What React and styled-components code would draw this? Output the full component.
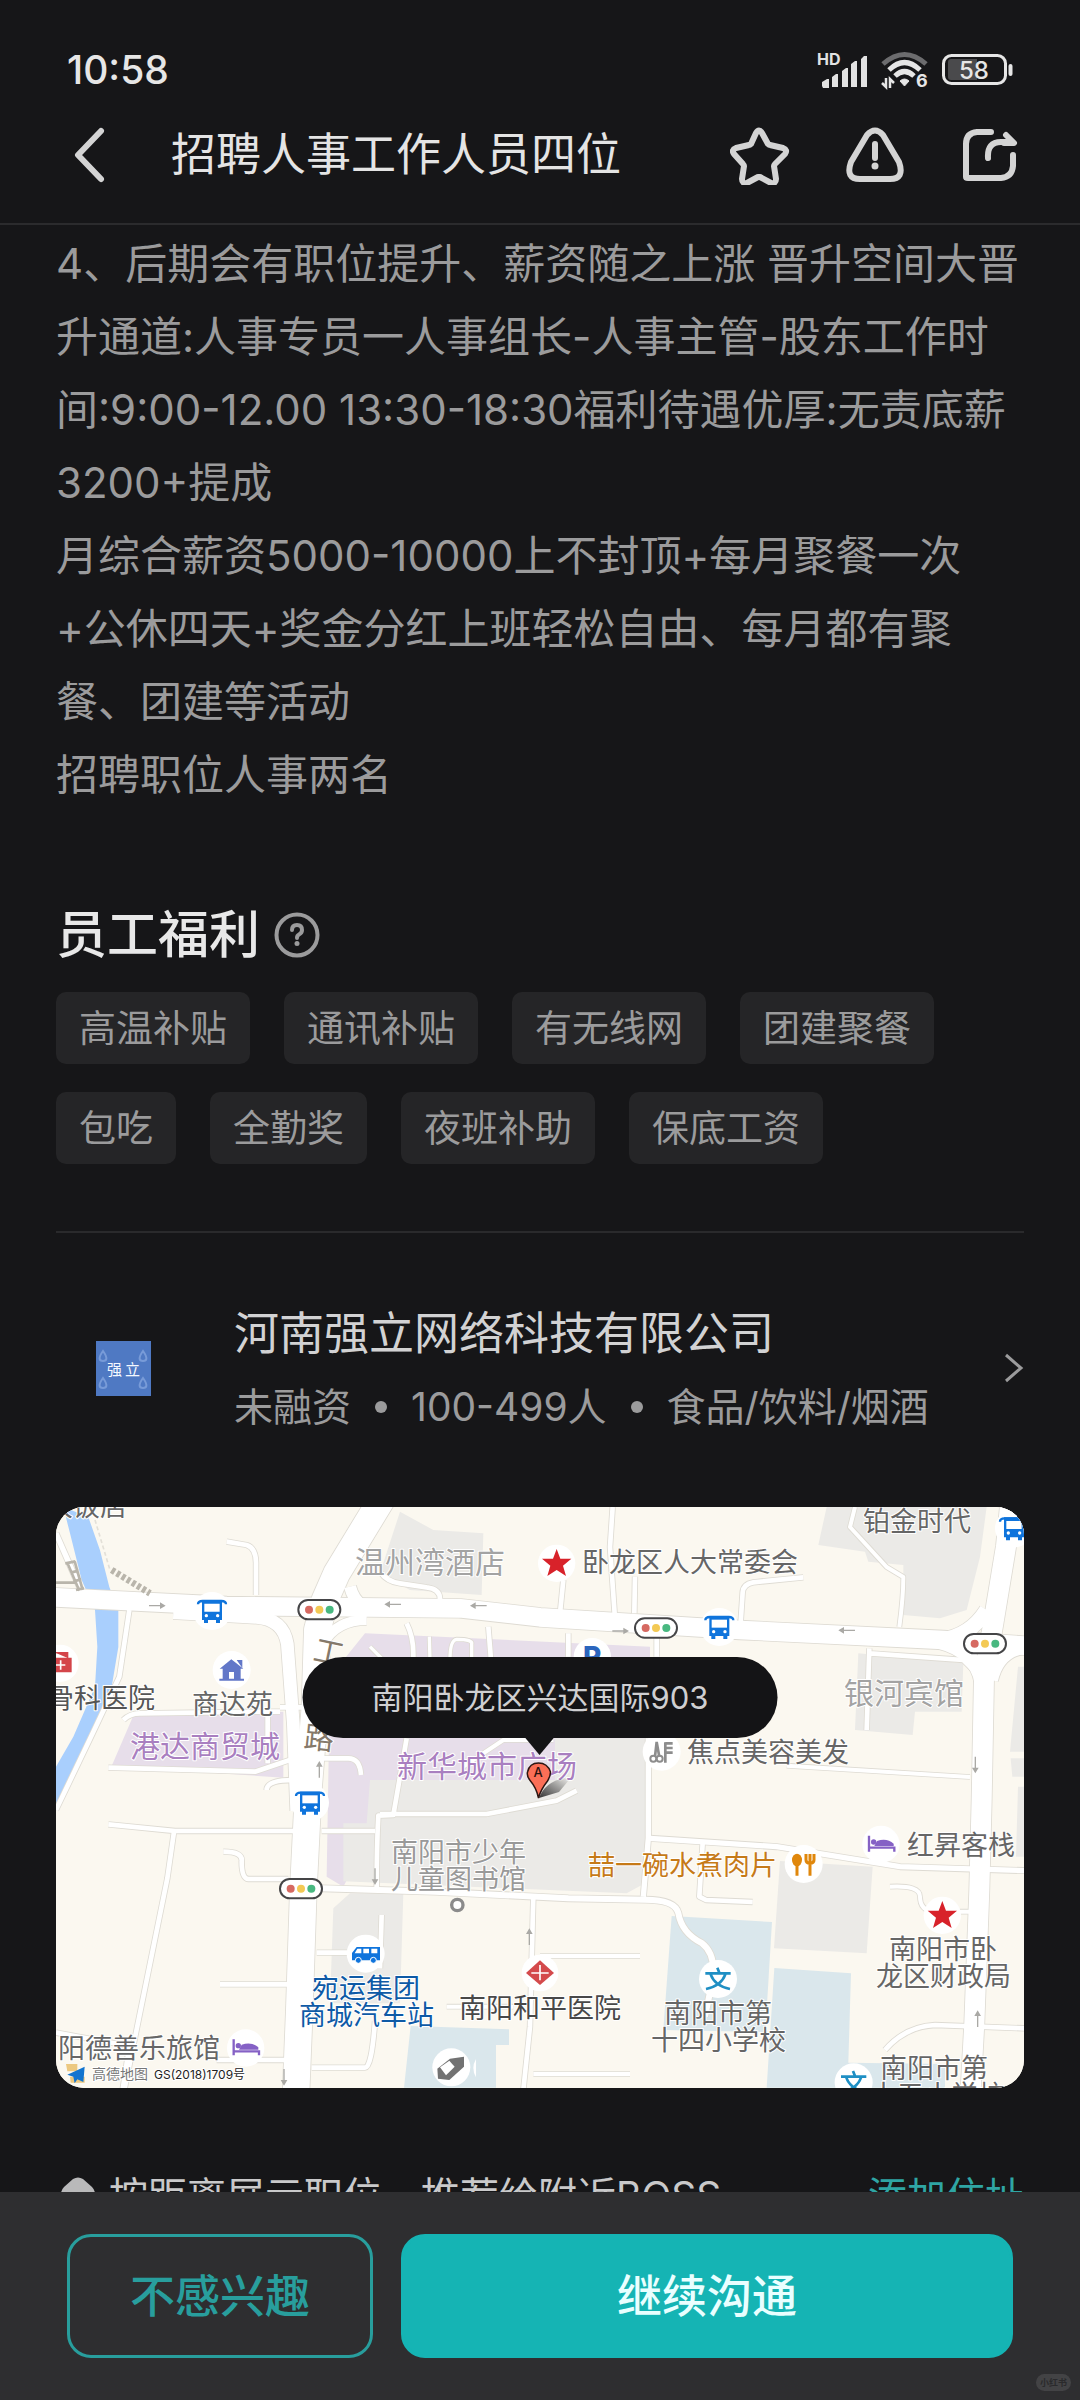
import React from "react";
import styled, { createGlobalStyle } from "styled-components";

const GlobalStyle = createGlobalStyle`
  * { box-sizing: border-box; }
  html, body { margin: 0; background: #161618; }
  body, button {
    font-family: Inter, "Noto Sans CJK SC", "Noto Sans", sans-serif;
  }
  h1, h2, h3, p, ul { margin: 0; padding: 0; font-weight: 400; }
  button { border: 0; padding: 0; background: none; color: inherit; cursor: pointer; }
`;

/* ---------- layout ---------- */

const Screen = styled.div`
  display: flex;
  flex-direction: column;
  height: 100vh;
  background: #161618;
  color: #e6e6e6;
`;

const Header = styled.header`
  flex: none;
  border-bottom: 2px solid #2b2b2d;
`;

const StatusBar = styled.div`
  display: flex;
  align-items: flex-end;
  justify-content: space-between;
  height: 94px;
  padding: 0 67px;
`;

const Clock = styled.time`
  font-size: 39px;
  line-height: 48px;
  font-weight: 500;
`;

const StatusIcons = styled.div`
  display: flex;
  align-items: center;
  gap: 14px;
  height: 48px;

  svg { overflow: visible; }
`;

const NavBar = styled.nav`
  display: flex;
  align-items: center;
  height: 129px;
  padding: 0 60px 8px;
`;

const Title = styled.h1`
  flex: 1;
  margin-left: 51px;
  font-size: 45px;
  line-height: 60px;
  color: #e4e4e4;
`;

const NavActions = styled.div`
  display: flex;
  gap: 55px;
`;

const IconButton = styled.button`
  display: flex;
  width: 60px;
  height: 60px;
  color: #d4d4d4;
`;

const Content = styled.main`
  flex: 1;
  min-height: 0;
  overflow-y: auto;
  scrollbar-width: none;
  padding: 0 56px;
`;

const Description = styled.p`
  padding-top: 2px;
  white-space: pre-line;
  font-size: 42px;
  line-height: 73px;
  color: #9b9b9c;
`;

const Benefits = styled.section`
  margin-top: 94px;
  padding-bottom: 67px;
  border-bottom: 2px solid #2a2a2c;
`;

const SectionHead = styled.div`
  display: flex;
  align-items: center;
  gap: 14px;
  height: 60px;
`;

const SectionTitle = styled.h2`
  font-size: 51px;
  line-height: 60px;
  font-weight: 500;
  color: #e8e8e8;
`;

const HelpButton = styled.button`
  display: flex;
  color: #9b9b9c;
`;

const TagList = styled.ul`
  display: flex;
  flex-wrap: wrap;
  gap: 28px 34px;
  margin-top: 27px;
  list-style: none;
`;

const Tag = styled.li`
  height: 72px;
  padding: 0 23px;
  border-radius: 10px;
  background: #252527;
  font-size: 37px;
  line-height: 74px;
  color: #9b9b9c;
`;

const Company = styled.a`
  display: flex;
  align-items: center;
  margin-top: 67px;
  height: 140px;
  color: inherit;
  text-decoration: none;

  > svg { margin-bottom: 4px; }
`;

const Logo = styled.span`
  display: flex;
  flex: none;
  justify-content: center;
  width: 135px;
  padding-bottom: 4px;
`;

const CompanyText = styled.div`
  flex: 1;
  margin-left: 43px;
`;

const CompanyName = styled.h3`
  font-size: 45px;
  line-height: 73px;
  color: #d2d2d3;
`;

const Facts = styled.p`
  display: flex;
  align-items: center;
  gap: 24px;
  font-size: 39px;
  line-height: 73px;
  color: #9b9b9c;
`;

const Dot = styled.i`
  width: 12px;
  height: 12px;
  border-radius: 50%;
  background: #9b9b9c;
`;

const MapCard = styled.div`
  position: relative;
  margin-top: 67px;
  border-radius: 28px;
  overflow: hidden;
  background: #fbf8f0;

  > svg { display: block; width: 100%; height: auto; }
`;

const Callout = styled.div`
  position: absolute;
  top: 150px;
  left: 50%;
  transform: translateX(-50%);
  padding: 0 69px;
  border-radius: 41px;
  background: #141416;
  font-size: 31px;
  line-height: 81px;
  white-space: nowrap;
  color: #cfcfd1;

  &::after {
    content: "";
    position: absolute;
    top: 100%;
    left: 50%;
    margin: -1px 0 0 -15px;
    border: 15px solid transparent;
    border-top: 18px solid #141416;
    border-bottom: 0;
  }
`;

const Nearby = styled.div`
  display: flex;
  align-items: center;
  gap: 11px;
  margin-top: 78px;
  font-size: 39px;
  line-height: 60px;
  color: #c9c9ca;
  white-space: nowrap;
`;

const NearbyText = styled.span`
  flex: 1;
`;

const AddLink = styled.a`
  color: #2fa5a4;
  text-decoration: none;
`;

const Footer = styled.footer`
  flex: none;
  position: relative;
  display: grid;
  grid-template-columns: 1fr 2fr;
  gap: 28px;
  height: 208px;
  padding: 42px 67px;
  background: #2e2e30;
`;

const ActionButton = styled.button`
  height: 124px;
  padding-bottom: 6px;
  border-radius: 24px;
  border: 3px solid ${(p) => (p.$primary ? "#15b4b4" : "#289e9d")};
  background: ${(p) => (p.$primary ? "#15b4b4" : "transparent")};
  color: ${(p) => (p.$primary ? "#e9ffff" : "#289e9d")};
  font-size: 45px;
  font-weight: 500;
`;

const Watermark = styled.small`
  position: absolute;
  right: 9px;
  bottom: 9px;
  padding: 0 4px;
  border-radius: 9px;
  background: #434345;
  color: #2a2a2c;
  font-size: 9px;
  line-height: 17px;
  font-weight: 700;
`;

/* ---------- icons ---------- */

const SvgText = styled.text`
  font-family: Inter, "Noto Sans CJK SC", sans-serif;
  font-size: ${(p) => p.$size}px;
  font-weight: ${(p) => p.$weight || 400};
`;

const Signal = () => (
  <svg width="50" height="36" viewBox="0 0 50 36" fill="#e2e2e2" aria-label="信号">
    <SvgText $size={16} $weight={700} x="0" y="13">HD</SvgText>
    <path d="M5 34v-4l5-3h2v9H6z M15 35v-10l4-3h2v13z M25 35V19l4-3h2v19z M34 35V12l4-3h2v26z M44 35V7l3-3h3v31z" />
  </svg>
);

const Wifi = () => (
  <svg width="47" height="38" viewBox="0 0 47 38" fill="none" aria-label="无线网络">
    <path d="M2 13Q23.500-6 45 13" stroke="#6c6c6e" strokeWidth="5" />
    <path d="M8 19Q23.500 4 39 19M14 25Q23.500 16 33 25" stroke="#e6e6e6" strokeWidth="5" />
    <path d="M19 30q4.500-4 9 0l-4.500 5z" fill="#e6e6e6" stroke="#e6e6e6" />
    <path d="M5 27v9l-4-4M9 37v-9l4 4" stroke="#e6e6e6" strokeWidth="2.500" />
    <SvgText $size={18} $weight={700} x="35" y="36" fill="#e6e6e6">6</SvgText>
  </svg>
);

const Battery = () => (
  <svg width="71" height="32" viewBox="0 0 71 32" aria-label="电量">
    <rect x="1.500" y="1.500" width="62" height="28" rx="8" fill="none" stroke="#e6e6e6" strokeWidth="3" />
    <path d="M9 5h26v21H9q-3 0-3-3V8q0-3 3-3z" fill="#4a4a4c" />
    <path d="M68.500 12v8" stroke="#e6e6e6" strokeWidth="4" strokeLinecap="round" />
    <SvgText $size={24} $weight={500} x="32" y="25" textAnchor="middle" fill="#e6e6e6">58</SvgText>
  </svg>
);

const Glyph = ({ children, w = 5 }) => (
  <svg width="60" height="60" viewBox="0 0 60 60" fill="none" stroke="currentColor"
    strokeWidth={w} strokeLinecap="round" strokeLinejoin="round" aria-hidden="true">
    {children}
  </svg>
);

const HelpIcon = () => (
  <svg width="46" height="46" viewBox="0 0 46 46" fill="none" stroke="currentColor" strokeWidth="4" strokeLinecap="round" aria-hidden="true">
    <circle cx="23" cy="23" r="20.500" />
    <path d="M18 18q0-5 5-5t5 5q0 3-3 4.500-2 1-2 3.500" strokeWidth="4" />
    <circle cx="23" cy="31.500" r="2.500" fill="currentColor" stroke="none" />
  </svg>
);

const drop = "c-5 7-4 10 0 10s5-3 0-10z";
const LogoArt = () => (
  <svg width="55" height="55" viewBox="0 0 55 55" aria-hidden="true">
    <path d="M0 0h55v55H0z" fill="#4f79c3" />
    <path d={`M7 10${drop}M47 10${drop}M7 37${drop}M47 37${drop}`} fill="none" stroke="#789bd8" strokeWidth="2" />
    <SvgText $size={15} x="11" y="34" fill="#f4f8ff">强</SvgText>
    <SvgText $size={15} x="29" y="34" fill="#f4f8ff">立</SvgText>
  </svg>
);

/* ---------- map ---------- */

const areas = [
  ["#a9cffd", "M70 51l75 30 35 100 28 110 27 70v110l-20 120-65 150-90 190-12 20V830l52-90 65-150 7-120-7-110-40-90-35-140z"],
  ["#ebeae7", "M1080 65l100 55 150 10-5 185-215-15-90-50z"],
  ["#ebeae7", "M2360 51h480l-20 150-40 159-80 25-110-10V225l-105-10-10-30-140-20z"],
  ["#ebeae7", "M2455 490l315 30-5 145h-140l-7 70-173-15z"],
  ["#ebeae7", "M2952 530l-18 0-24 255h42zM2952 805h-40l5 55h35zM2952 890h-18l-6 210h24z"],
  ["#e7deea", "M285 665h445v198l-515-35z"],
  ["#e7deea", "M870 560l105-130 855 40v280l-270 150-550 100-100 190-50-30z"],
  ["#ebeae7", "M990 870l555 0V745h275l-5 435-55 30-850-36V1000h70z"],
  ["#ebeae7", "M930 1210h160l-10 330H870l10-285z"],
  ["#dae7ec", "M1112 1608l295 10v47h-39v128h-276z"],
  ["#dae7ec", "M1895 1278l301 18-20 330-306-6z"],
  ["#ebeae7", "M2220 1113l278 17-18 260-278-15z"],
  ["#dae7ec", "M2203 1434l230 16-8 268 290 4v71h-535z"],
];

const lanes = [
  [16, "M48 130l70 160"],
  [14, "M268 360l-30 200-80 170-110 230"],
  [14, "M560 155l60 10q30 10 28 60v90"],
  [14, "M1020 245q20 30 60 35l80 12q40 5 40 35"],
  [36, "M930 290q10 40 40 60"],
  [14, "M1718 51l-8 120 14 200"],
  [14, "M1785 260l-2 110M1570 270l-10 100"],
  [14, "M2290 262l-150 15q-30 5-32 30l-6 90"],
  [12, "M2445 51l-15 60 110 120 50 30q0 60-12 150"],
  [14, "M1100 400q20 40 20 90v20M1345 410l8 100M1585 430v70M1850 440v60"],
  [30, "M850 460q40-70 130-70"],
  [10, "M990 470l40 40M1168 440l2 70M1230 510q0-60 20-62 50 0 45 15v50"],
  [14, "M2488 475l-8 245M2490 490l280 20 50 50"],
  [14, "M720 652h80M250 690q20-20 50-20l370-5h50M683 660v160"],
  [14, "M205 833l440 12 120-40h160q35 0 38 50M680 900q0-30 80-30"],
  [14, "M205 1003l200 20h400M402 1025l-20 140-130 640"],
  [14, "M845 1023h160M550 1085q60 0 55 30 0 50 20 52h120"],
  [14, "M1100 745l-40 230-45 2q-5 90-5 220M1020 972h320l210-40 60-30"],
  [12, "M1270 830l120-80 150 0"],
  [18, "M845 1195l340 10 400 20 230 4q90 0 100 40 10 60 70 90 40 30 35 100l-25 120"],
  [14, "M1480 1220l-10 390-20 190"],
  [16, "M1825 745v300l-15 175"],
  [16, "M1830 1045l380 25 370 60 380 12"],
  [14, "M1988 1060l-10 160 20 10 140 6"],
  [12, "M2240 827l550 34"],
  [14, "M540 1483h210M830 1388h100M1025 1275l-5 160"],
  [14, "M815 1733h160q20 0 30-140M48 1628l220 40-20 130M530 1710h210"],
  [12, "M1500 1398h300M1480 1752h290M1220 1550h200"],
  [12, "M2550 1190q90-5 90 30 0 40 40 45h110"],
  [14, "M2535 1680q60-70 150-75l270 10"],
  [38, "M400 368l250 14q80 5 92 80l18 240 10 260"],
  [80, "M1030 20l-140 230-35 80-23 90-7 230-20 250-15 300-12 360-10 250"],
  [56, "M40 322l520 26 700 7 240 27 600 38 610 30 260 18"],
  [60, "M2912 30l-14 140-38 230-28 160-7 370-7 270-15 400-11 200"],
  [44, "M2700 450q90-10 140-90M2700 455q110 30 125 120M2952 470q-80 10-100 100"],
];

const Bus = ({ x, y }) => (
  <g transform={`translate(${x} ${y})`}>
    <circle r="57" fill="#fff" />
    <path d="M-42-20q0-10 14-10h56q14 0 14 10" fill="none" stroke="#0f74dc" strokeWidth="7" />
    <path d="M-30-33h60v60h-6v9H12v-9h-24v9h-12v-9h-6z" fill="#0f74dc" />
    <path d="M-23-22h46V2h-46z" fill="#fff" />
    <circle cx="-17" cy="14" r="5" fill="#fff" /><circle cx="17" cy="14" r="5" fill="#fff" />
  </g>
);

const Lights = ({ x, y }) => (
  <g transform={`translate(${x} ${y})`}>
    <rect x="-63" y="-29" width="126" height="58" rx="29" fill="#fff" stroke="#454547" strokeWidth="6" />
    <circle cx="-31" r="12" fill="#d66961" /><circle r="12" fill="#f3c954" /><circle cx="31" r="12" fill="#48b880" />
  </g>
);

const Star = ({ x, y }) => (
  <g transform={`translate(${x} ${y})`}>
    <circle r="56" fill="#fff" />
    <path d="M0-43l11 29h33L19 7l9 31L0 20l-28 18 9-31-25-21h33z" fill="#d8222a" />
  </g>
);

const Bed = ({ x, y }) => (
  <g transform={`translate(${x} ${y})`}>
    <circle r="56" fill="#fff" />
    <path d="M-36-26v48M-36 10h76v12" fill="none" stroke="#8561c5" strokeWidth="7" />
    <path d="M-12-10q30-10 50 8v7h-58z" fill="#8561c5" /><circle cx="-22" cy="-7" r="8" fill="#8561c5" />
  </g>
);

const School = ({ x, y }) => (
  <g transform={`translate(${x} ${y})`}>
    <circle r="57" fill="#fff" />
    <path d="M-2-34l6 15M-38-17h76M-22-14Q-10 20 36 30M22-14Q10 20-36 30" fill="none" stroke="#1f8fc4" strokeWidth="8" />
  </g>
);

const arrows = [
  [352, 347, 0], [1058, 343, 180], [1315, 347, 180], [1742, 423, 0], [2420, 421, 180],
  [838, 838, -90], [2806, 825, 90], [1005, 1160, 90], [1468, 1340, -90], [2813, 1586, -90], [732, 1762, 90],
];

const labels = [
  ["大饭店", -10, 9, 27, "#666"],
  ["温州湾酒店", 299, 66, 30, "#a3a3a3"],
  ["卧龙区人大常委会", 526, 65, 27, "#666"],
  ["铂金时代", 807, 24, 27, "#666"],
  ["骨科医院", -9, 201, 27, "#555"],
  ["商达苑", 136, 207, 27, "#666"],
  ["港达商贸城", 74, 250, 30, "#a97fc0"],
  ["新华城市广场", 341, 270, 30, "#a97fc0"],
  ["焦点美容美发", 631, 255, 27, "#666"],
  ["银河宾馆", 788, 197, 30, "#a3a3a3"],
  ["南阳市少年", 335, 355, 27, "#999"],
  ["儿童图书馆", 335, 382, 27, "#999"],
  ["喆一碗水煮肉片", 532, 368, 27, "#c67a18"],
  ["红昇客栈", 851, 348, 27, "#666"],
  ["南阳市卧", 833, 452, 27, "#666"],
  ["龙区财政局", 820, 479, 27, "#666"],
  ["宛运集团", 256, 491, 27, "#0e5aa6"],
  ["商城汽车站", 243, 518, 27, "#0e5aa6"],
  ["南阳和平医院", 403, 511, 27, "#484848"],
  ["南阳市第", 608, 516, 27, "#666"],
  ["十四小学校", 595, 543, 27, "#666"],
  ["南阳市第", 824, 571, 27, "#666"],
  ["十五小学校", 814, 598, 27, "#666"],
  ["阳德善乐旅馆", 2, 551, 27, "#666"],
  ["高德地图", 36, 572, 14, "#777"],
  ["GS(2018)1709号", 98, 572, 12, "#222"],
];

const MapLabel = styled(SvgText)`
  paint-order: stroke;
  stroke: #fff;
  stroke-width: 2px;
  stroke-linejoin: round;
`;

const StreetMap = () => (
  <svg viewBox="0 0 968 581" role="img" aria-label="地图">
    <path d="M0 0h968v581H0z" fill="#fbf8f0" />
    <g transform="translate(-16 -17) scale(0.33333)">
      {areas.map(([fill, d]) => <path key={d} d={d} fill={fill} />)}
      <g fill="none" strokeLinejoin="round">
        {lanes.map(([w, d]) => <path key={d} d={d} stroke="#dedbd3" strokeWidth={w + 5} />)}
        {lanes.map(([w, d]) => <path key={d} d={d} stroke="#fff" strokeWidth={w} />)}
        <path d="M215 240l115 70" stroke="#b9b5ab" strokeWidth="20" strokeDasharray="11 7" />
        <path d="M165 90l45 150" stroke="#e3e0d8" strokeWidth="5" strokeDasharray="12 8" />
        <path d="M82 218l36 84M104 214l24 86M48 278h58M76 220l30-6M92 248l24-6M100 274l24-6M108 300l24-6" stroke="#b9b5ab" strokeWidth="8" />
      </g>
      {arrows.map(([x, y, r]) => (
        <path key={`${x}-${y}`} transform={`translate(${x} ${y}) rotate(${r})`} d="M-25-2H8v-8l17 10L8 10V2h-33z" fill="#aaa9a5" />
      ))}
      <circle cx="60" cy="520" r="56" fill="#fff" />
      <path d="M40 505h53v40H40z M45 488h38v16" fill="#d4454a" stroke="#d4454a" strokeWidth="4" />
      <path d="M62 511v28M48 525h28" stroke="#fff" strokeWidth="5" />
      <circle cx="575" cy="540" r="57" fill="#fff" />
      <path d="M574 508l36 28h-8v30h10v6h-74v-6h10v-30h-9zM590 510h17v24z" fill="#6277c8" />
      <path d="M567 546h15v20h-15z" fill="#fff" />
      <circle cx="1657" cy="500" r="56" fill="#fff" />
      <Bus x={516} y={363} />
      <Bus x={810} y={938} />
      <Bus x={2038} y={411} />
      <Bus x={2922} y={115} />
      <Star x={1550} y={220} />
      <Star x={2707} y={1276} />
      <Bed x={617} y={1674} />
      <Bed x={2523} y={1063} />
      <School x={2034} y={1467} />
      <School x={2441} y={1777} />
      <circle cx="1865" cy="785" r="57" fill="#fff" />
      <path d="M1845 800l5-44 8 44M1876 757v61M1876 760h22M1876 774h22M1876 788h22" fill="none" stroke="#8d8d8d" strokeWidth="8" />
      <circle cx="1840" cy="806" r="9" fill="none" stroke="#8d8d8d" strokeWidth="6" />
      <circle cx="1859" cy="806" r="9" fill="none" stroke="#8d8d8d" strokeWidth="6" />
      <circle cx="2291" cy="1122" r="57" fill="#fff" />
      <ellipse cx="2271" cy="1110" rx="15" ry="19" fill="#e0870c" />
      <path d="M2271 1125v32M2310 1115v42M2298 1092v18q0 10 12 10t12-10v-18M2310 1092v25" fill="none" stroke="#e0870c" strokeWidth="9" />
      <circle cx="977" cy="1391" r="57" fill="#fff" />
      <path d="M950 1371h70v40h-84v-22z" fill="#0f74dc" />
      <path d="M952 1376h12v14h-20zM970 1376h17v14h-17zM994 1376h18v14h-18z" fill="#fff" />
      <circle cx="955" cy="1411" r="9" fill="#0f74dc" stroke="#fff" strokeWidth="3" />
      <circle cx="1000" cy="1411" r="9" fill="#0f74dc" stroke="#fff" strokeWidth="3" />
      <circle cx="1500" cy="1449" r="55" fill="#fff" />
      <path d="M1500 1411l42 38-42 36-42-36z" fill="#d44a4c" />
      <path d="M1500 1425v46M1474 1449h52" stroke="#fff" strokeWidth="5" />
      <circle cx="1234" cy="1732" r="57" fill="#fff" />
      <path d="M1192 1736l38-30 42-6v30l-44 40-34-4z" fill="#727272" />
      <path d="M1200 1732l28-20 16 18-26 26z" fill="#fff" />
      <path d="M1308 1707q-16 27 0 55" fill="#fff" />
      <circle cx="1252" cy="1245" r="17" fill="#fff" stroke="#8b8b8b" strokeWidth="10" />
      <Lights x={838} y={359} />
      <Lights x={1848} y={414} />
      <Lights x={2835} y={461} />
      <Lights x={783} y={1196} />
      <path d="M78 1722h34v22H82zM90 1760h44v18H92z" fill="#ecc880" />
      <path d="M134 1730l-52 24 18 6 4 20 8-12 18 8z" fill="#1274cf" />
    </g>
    {labels.map(([text, x, y, size, color]) => (
      <MapLabel key={`${x}-${y}`} $size={size} x={x} y={y} fill={color}>{text}</MapLabel>
    ))}
    <MapLabel $size={30} x="258" y="156" fill="#85796a" transform="rotate(12 273 145)">工</MapLabel>
    <MapLabel $size={30} x="248" y="242" fill="#85796a" transform="rotate(6 263 231)">路</MapLabel>
    <MapLabel $size={28} $weight={800} x="527" y="160" fill="#2b65bd">P</MapLabel>
    <defs>
      <linearGradient id="shade" x1="0" y1="1" x2="1" y2="0">
        <stop offset="0" stopColor="#333" />
        <stop offset="1" stopColor="#333" stopOpacity="0" />
      </linearGradient>
    </defs>
    <path d="M483 291q6-16 25-20l5 2-10 12z" fill="url(#shade)" />
    <path d="M482.500 291q-2-10-8-17-4-5-3-9 2-9 11-9t12 9q0 4-3 9-7 9-9 17z" fill="#fb6f57" stroke="#2e1613" strokeWidth="1.500" />
    <SvgText $size={13} $weight={500} x="482" y="270" textAnchor="middle" fill="#2a120f">A</SvgText>
  </svg>
);

/* ---------- page ---------- */

const description = [
  "4、后期会有职位提升、薪资随之上涨 晋升空间大晋",
  "升通道:人事专员一人事组长-人事主管-股东工作时",
  "间:9:00-12.00 13:30-18:30福利待遇优厚:无责底薪",
  "3200+提成",
  "月综合薪资5000-10000上不封顶+每月聚餐一次",
  "+公休四天+奖金分红上班轻松自由、每月都有聚",
  "餐、团建等活动",
  "招聘职位人事两名",
].join("\n");

const benefits = ["高温补贴", "通讯补贴", "有无线网", "团建聚餐", "包吃", "全勤奖", "夜班补助", "保底工资"];

export default function App() {
  return (
    <Screen>
      <GlobalStyle />
      <Header>
        <StatusBar>
          <Clock>10:58</Clock>
          <StatusIcons><Signal /><Wifi /><Battery /></StatusIcons>
        </StatusBar>
        <NavBar>
          <IconButton aria-label="返回">
            <Glyph w={6}><path d="M41 6L18 30l23 24" /></Glyph>
          </IconButton>
          <Title>招聘人事工作人员四位</Title>
          <NavActions>
            <IconButton aria-label="收藏">
              <Glyph w={6}>
                <path d="M26 8q3-5 6 0l6 11q1 1 2 1l13 3q5 2 2 6l-10 10q-1 1-1 2l2 13q0 5-5 4l-11-6q-1 0-2 0l-11 6q-5 1-5-4l2-13q0-1-1-2L4 29q-3-4 2-6l13-3q1 0 2-1z" />
              </Glyph>
            </IconButton>
            <IconButton aria-label="举报">
              <Glyph w={6}>
                <path d="M22 10q8-9 16 0l16 27q6 17-9 17H15Q0 54 6 37zM30 19v14" />
                <circle cx="30" cy="41" r="3.500" fill="currentColor" stroke="none" />
              </Glyph>
            </IconButton>
            <IconButton aria-label="分享">
              <Glyph w={6}>
                <path d="M31 7H17Q6 8 6 19v33q0 1 2 1h33q11-1 12-12V30M28 33q-1-16 13-16h10M46 10l8 8H44" />
              </Glyph>
            </IconButton>
          </NavActions>
        </NavBar>
      </Header>

      <Content>
        <Description>{description}</Description>

        <Benefits>
          <SectionHead>
            <SectionTitle>员工福利</SectionTitle>
            <HelpButton aria-label="说明"><HelpIcon /></HelpButton>
          </SectionHead>
          <TagList>
            {benefits.map((b) => <Tag key={b}>{b}</Tag>)}
          </TagList>
        </Benefits>

        <Company href="#company">
          <Logo><LogoArt /></Logo>
          <CompanyText>
            <CompanyName>河南强立网络科技有限公司</CompanyName>
            <Facts>
              <span>未融资</span><Dot /><span>100-499人</span><Dot /><span>食品/饮料/烟酒</span>
            </Facts>
          </CompanyText>
          <svg width="20" height="30" viewBox="0 0 20 30" fill="none" stroke="#9b9b9c" strokeWidth="3" aria-hidden="true">
            <path d="M2 2l15 13L2 28" />
          </svg>
        </Company>

        <MapCard>
          <StreetMap />
          <Callout>南阳卧龙区兴达国际903</Callout>
        </MapCard>

        <Nearby>
          <svg width="42" height="38" viewBox="0 0 42 38" fill="#b9b9ba" aria-hidden="true">
            <path d="M17 2q5-3 10 0l9 8q3 3 3 7v18q0 3-3 3H8q-3 0-3-3V17q0-4 3-7z" />
          </svg>
          <NearbyText>按距离展示职位，推荐给附近BOSS</NearbyText>
          <AddLink href="#address">添加住址</AddLink>
        </Nearby>
      </Content>

      <Footer>
        <ActionButton>不感兴趣</ActionButton>
        <ActionButton $primary>继续沟通</ActionButton>
        <Watermark>小红书</Watermark>
      </Footer>
    </Screen>
  );
}
